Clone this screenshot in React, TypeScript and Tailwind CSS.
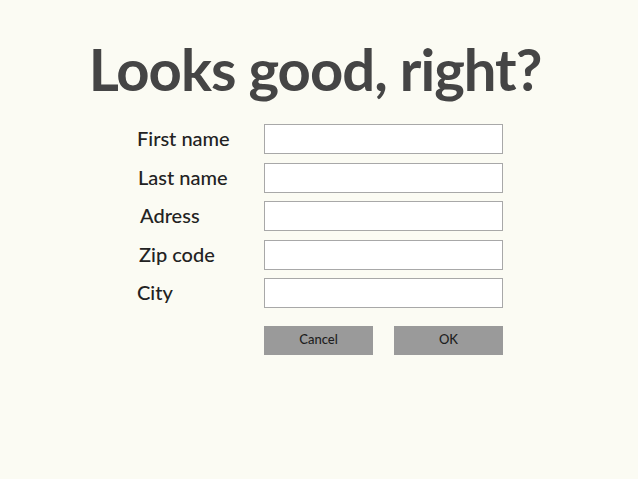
import { FC } from "react"

const fields = [
  { label: "First name", offset: "pl-0" },
  { label: "Last name", offset: "pl-px" },
  { label: "Adress", offset: "pl-[3px]" },
  { label: "Zip code", offset: "pl-[2px]" },
  { label: "City", offset: "pl-0" },
]

const App: FC = () => {
  return (
    <div className="w-[638px] h-[479px] bg-[#fbfbf3] font-['Lato','Open_Sans',sans-serif] overflow-hidden">
      <h1 className="pt-[33px] pr-[8px] text-center text-[58px] leading-[72px] font-bold text-[#454545] tracking-[-1px]">
        Looks good, right?
      </h1>
      <div className="mt-[19px] pl-[137px] flex flex-col gap-[8.5px]">
        {fields.map((f) => (
          <div key={f.label} className="flex items-center h-[30px]">
            <label className={`w-[127px] ${f.offset} pb-[2px] text-[20px] font-medium text-[#222]`}>{f.label}</label>
            <input
              type="text"
              className="w-[239px] h-[30px] bg-white border border-[#a8a8a8] outline-none"
            />
          </div>
        ))}
        <div className="flex gap-[21px] pl-[127px] mt-[9px]">
          <button className="w-[109px] h-[29px] bg-[#9a9a9a] text-[13px] font-medium text-[#1e1e1e]">Cancel</button>
          <button className="w-[109px] h-[29px] bg-[#9a9a9a] text-[13px] font-medium text-[#1e1e1e]">OK</button>
        </div>
      </div>
    </div>
  )
}

export default App
